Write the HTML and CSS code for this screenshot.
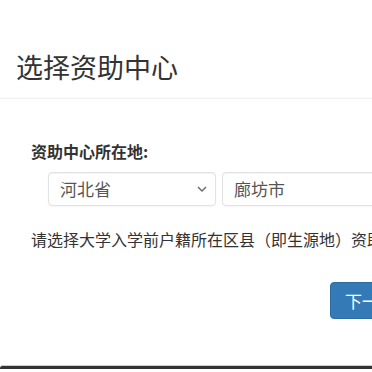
FILE: index.html
```html
<!DOCTYPE html>
<html lang="zh-CN">
<head>
<meta charset="utf-8">
<title>选择资助中心</title>
<link rel="stylesheet" href="styles.css">
</head>
<body>
<div class="modal">
  <div class="modal-header">
    <h4 class="modal-title">选择资助中心</h4>
  </div>
  <div class="modal-body">
    <div class="field-label">资助中心所在地:</div>
    <div class="select-row">
      <div class="select select-province">
        <span class="select-text">河北省</span>
        <svg class="chevron" width="10" height="6" viewBox="0 0 10 6"><path d="M1 1 L5 5 L9 1" fill="none" stroke="#666" stroke-width="1.4"/></svg>
      </div>
      <div class="select select-city">
        <span class="select-text">廊坊市</span>
      </div>
    </div>
    <p class="help">请选择大学入学前户籍所在区县（即生源地）资助中心</p>
    <div class="footer">
      <button class="btn-primary">下一步</button>
    </div>
  </div>
  <div class="bottom-edge"></div>
</div>
</body>
</html>
```
FILE: styles.css
```css
html, body {
  margin: 0;
  padding: 0;
  background: #fff;
  overflow: hidden;
}
body {
  font-family: "Noto Sans CJK SC", "Noto Sans", sans-serif;
  color: #333;
}
.modal {
  width: 372px;
  height: 372px;
  display: flex;
  flex-direction: column;
  overflow: hidden;
}
.modal-header {
  height: 99px;
  box-sizing: border-box;
  padding: 47px 0 0 16px;
  border-bottom: 1px solid #f0f0f0;
  background: linear-gradient(#fff 0, #fff 97px, #fafafa 97px);
}
.modal-title {
  margin: 0;
  font-size: 27px;
  line-height: 40px;
  font-weight: 400;
  color: #333;
  white-space: nowrap;
}
.modal-body {
  padding: 40px 0 0 31px;
  flex: 1;
  display: flex;
  flex-direction: column;
}
.field-label {
  font-size: 16px;
  line-height: 24px;
  font-weight: 700;
  color: #333;
  white-space: nowrap;
}
.select-row {
  display: flex;
  gap: 6px;
  margin: 9px 0 0 17px;
  width: 400px;
}
.select {
  height: 34px;
  box-sizing: border-box;
  border: 1px solid #e2e2e2;
  border-radius: 4px;
  box-shadow: inset 0 1px 1px rgba(0,0,0,.05), 0 1px 2px rgba(0,0,0,.04);
  display: flex;
  align-items: center;
  padding: 0 0 0 11px;
  background: #fff;
}
.select-province {
  width: 168px;
  flex: none;
  justify-content: space-between;
  padding-right: 8px;
}
.select-city {
  flex: 1;
}
.select-text {
  font-size: 17px;
  line-height: 24px;
  color: #555;
}
.chevron {
  display: block;
}
.help {
  margin: 21px 0 0 0;
  font-size: 16px;
  line-height: 24px;
  color: #333;
  white-space: nowrap;
}
.footer {
  margin: 31px 0 0 299px;
  white-space: nowrap;
}
.btn-primary {
  height: 37px;
  width: 90px;
  border: 1px solid #2e6da4;
  border-radius: 4px;
  background: #337ab7;
  color: #fff;
  font-family: inherit;
  font-size: 17px;
  text-align: left;
  padding: 0 0 0 14px;
  line-height: 35px;
}
.bottom-edge {
  height: 3px;
  margin-top: auto;
  margin-bottom: 3px;
  border-top: 1px solid #ccc;
  background: #333;
  border-radius: 3px 0 0 0;
}
```
